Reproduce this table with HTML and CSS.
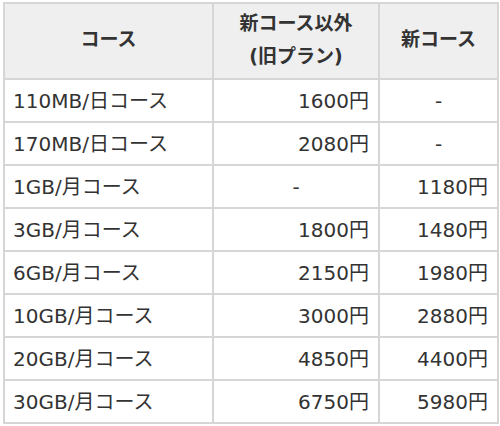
FILE: index.html
```html
<!DOCTYPE html>
<html lang="ja">
<head>
<meta charset="utf-8">
<link rel="stylesheet" href="styles.css">
</head>
<body>
<table class="plans">
  <colgroup>
    <col class="c1"><col class="c2"><col class="c3">
  </colgroup>
  <thead>
    <tr>
      <th>コース</th>
      <th>新コース以外<br>(旧プラン)</th>
      <th>新コース</th>
    </tr>
  </thead>
  <tbody>
    <tr><td>110MB/日コース</td><td class="num">1600円</td><td class="ctr">-</td></tr>
    <tr><td>170MB/日コース</td><td class="num">2080円</td><td class="ctr">-</td></tr>
    <tr><td>1GB/月コース</td><td class="ctr">-</td><td class="num">1180円</td></tr>
    <tr><td>3GB/月コース</td><td class="num">1800円</td><td class="num">1480円</td></tr>
    <tr><td>6GB/月コース</td><td class="num">2150円</td><td class="num">1980円</td></tr>
    <tr><td>10GB/月コース</td><td class="num">3000円</td><td class="num">2880円</td></tr>
    <tr><td>20GB/月コース</td><td class="num">4850円</td><td class="num">4400円</td></tr>
    <tr><td>30GB/月コース</td><td class="num">6750円</td><td class="num">5980円</td></tr>
  </tbody>
</table>
</body>
</html>
```
FILE: styles.css
```css
html, body {
  margin: 0;
  padding: 0;
  background: #fff;
}
body {
  padding: 2px 3px 0 3px;
  font-family: "DejaVu Sans", "Noto Sans CJK JP", sans-serif;
  font-size: 20px;
  color: #333;
}
.plans {
  border-collapse: collapse;
  width: 494px;
  table-layout: fixed;
}
.c1 { width: 209px; }
.c2 { width: 166px; }
.c3 { width: 119px; }
.plans th,
.plans td {
  border: 2px solid #d6d6d6;
  padding: 0 9px 0 9px;
  box-sizing: border-box;
  vertical-align: middle;
  white-space: nowrap;
}
.plans th {
  background: #efefef;
  font-weight: bold;
  text-align: center;
  line-height: 33px;
  height: 76px;
  padding-top: 0;
  padding-bottom: 3px;
  font-size: 19px;
}
.plans td {
  height: 43px;
  line-height: 24px;
}
.plans td:first-child { padding-left: 8px; }
.plans td.num { text-align: right; }
.plans td.ctr { text-align: center; }
```
